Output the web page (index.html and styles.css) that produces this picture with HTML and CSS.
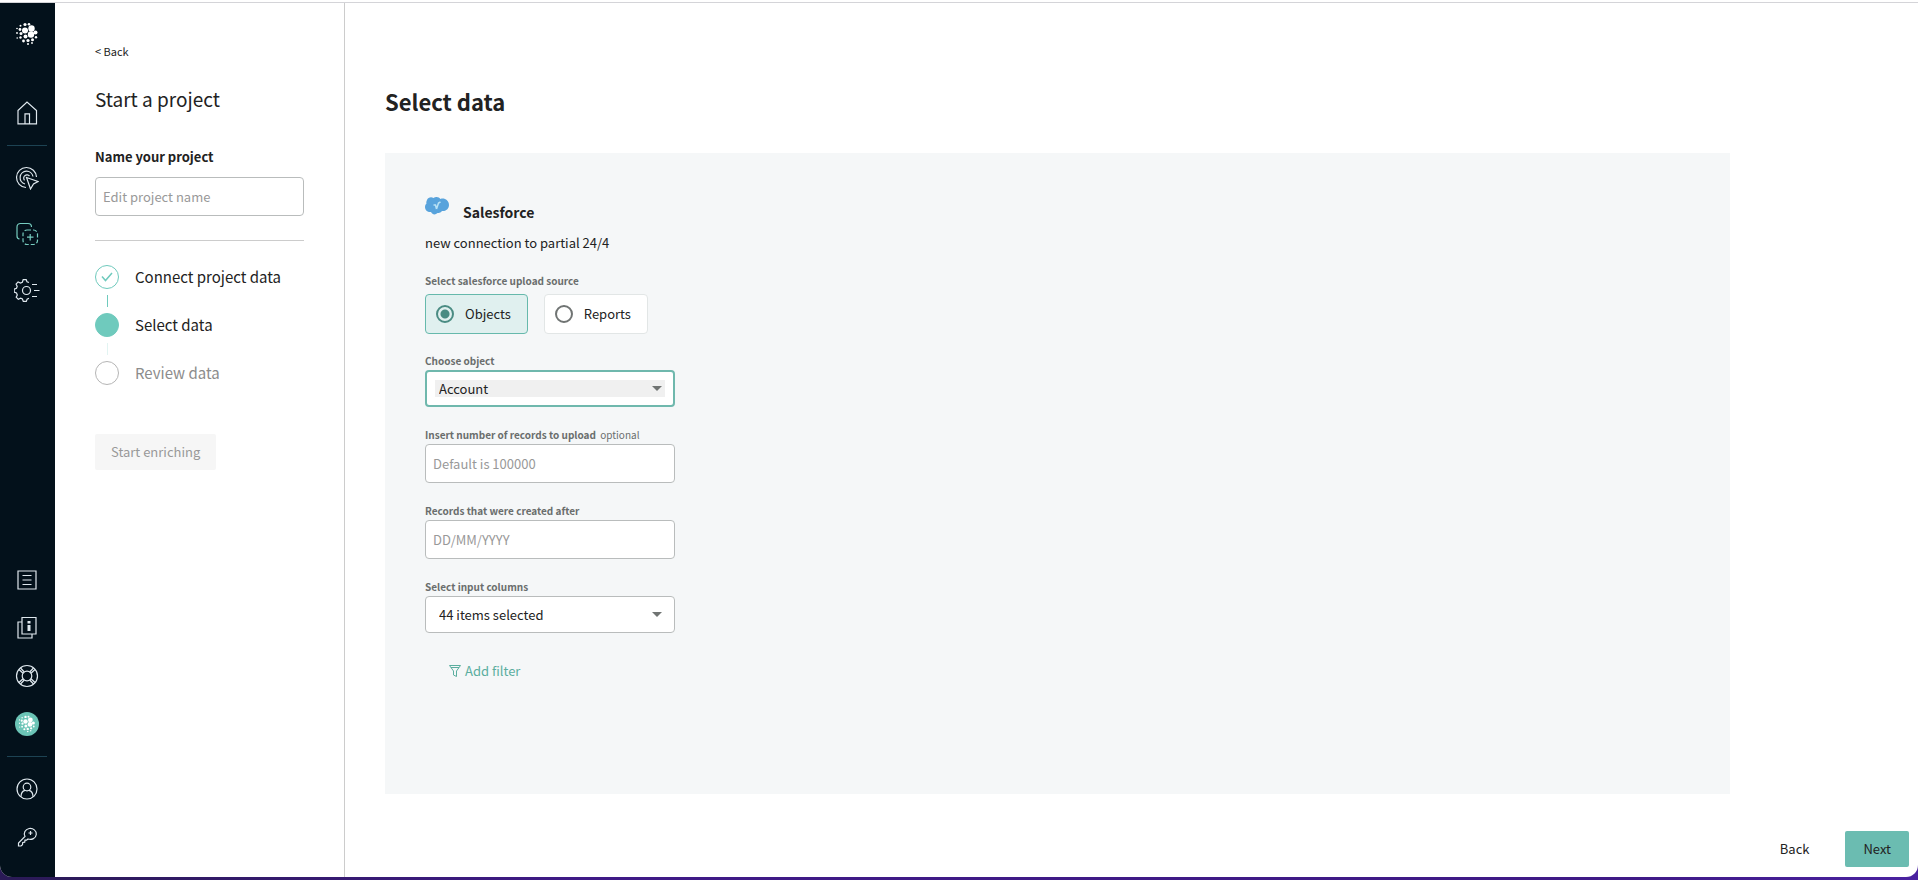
FILE: index.html
```html
<!DOCTYPE html>
<html lang="en">
<head>
    <meta charset="UTF-8">
    <meta name="viewport" content="width=device-width, initial-scale=1.0">
    <title>Start a project</title>
    <link rel="stylesheet" href="styles.css">
</head>
<body>

<div class="app">
    <!-- Left icon bar -->
    <nav class="sidebar" aria-label="Main">
        <a href="#" class="logo" aria-label="Dashboard">
            <svg width="24" height="24" viewBox="0 0 24 24">
                <g id="globe" fill="currentColor" stroke="none">
                    <circle cx="10" cy="8.500" r="3"/>
                    <circle cx="16.500" cy="6.500" r="3.200"/>
                    <circle cx="16" cy="12.500" r="3.200"/>
                    <circle cx="20.500" cy="10.500" r="2"/>
                    <circle cx="10.500" cy="14.500" r="2"/>
                    <circle cx="10" cy="2.500" r="1.600"/>
                    <circle cx="14" cy="2.200" r="1.300"/>
                    <circle cx="5.500" cy="3.800" r="1"/>
                    <circle cx="5" cy="7.500" r="1.400"/>
                    <circle cx="2" cy="6.500" r="0.800"/>
                    <circle cx="6" cy="11.500" r="1.500"/>
                    <circle cx="2" cy="11" r="0.900"/>
                    <circle cx="5.500" cy="15.500" r="1.200"/>
                    <circle cx="2.200" cy="16" r="0.800"/>
                    <circle cx="8.500" cy="19" r="1.400"/>
                    <circle cx="13" cy="18.500" r="1.600"/>
                    <circle cx="17.500" cy="17.800" r="1.500"/>
                    <circle cx="21" cy="15.300" r="1.200"/>
                    <circle cx="13" cy="22" r="1"/>
                    <circle cx="17" cy="21" r="0.900"/>
                </g>
            </svg>
        </a>
        <a href="#" class="nav-home" aria-label="Home">
            <svg width="24" height="24" viewBox="0 0 24 24"><path d="M3 9.500 12 1l9.500 8.500v13.300H3zM10 22.800v-10h4.500v10"/></svg>
        </a>
        <hr>
        <a href="#" class="nav-target" aria-label="Targets">
            <svg width="24" height="24" viewBox="0 0 24 24">
                <path d="M11 21.500A10 10 0 1 1 21.500 11"/>
                <path d="M10 18A6.500 6.500 0 1 1 18 10.500"/>
                <path d="M9.500 14.300A3.200 3.200 0 1 1 14.500 10"/>
                <path d="M11.500 11.500l11.500 4-4.500 2.500-3 5z"/>
            </svg>
        </a>
        <a href="#" class="nav-projects active" aria-label="Projects">
            <svg width="24" height="24" viewBox="0 0 24 24">
                <path d="M4.500 17A3 3 0 0 1 2 14V5a3.500 3.500 0 0 1 3.500-3.500h7.500a3.500 3.500 0 0 1 3.500 3.500"/>
                <rect x="8" y="8" width="14.500" height="14.500" rx="4" stroke-dasharray="4 2"/>
                <path d="M15.200 12v6.500M12 15.200h6.500"/>
            </svg>
        </a>
        <a href="#" class="nav-settings" aria-label="Settings">
            <svg width="26" height="24" viewBox="0 0 26 24">
                <path d="M15 3.500l-2-.800-.800-2h-3l-.900 2.500-1.800.8-2.400-1.100-2 2.100 1.100 2.400-.7 1.800-2.300.9v3l2.300.9.800 1.900-1.100 2.300 2.100 2.100 2.400-1.100 1.700.8.900 2.400h3l.800-2.300 1.900-.800"/>
                <circle cx="12.500" cy="11.500" r="4"/>
                <path d="M18 5.500h5M20 11.500h5.500M18 17.500h5"/>
            </svg>
        </a>
        <div class="nav-gap"></div>
        <a href="#" class="nav-list" aria-label="Reports">
            <svg width="24" height="24" viewBox="0 0 24 24"><path d="M3 3h18v18H3zM7.500 7.500h9M7.500 12h9M7.500 16.500h9"/></svg>
        </a>
        <a href="#" class="nav-docs" aria-label="Documentation">
            <svg width="24" height="24" viewBox="0 0 24 24">
                <path d="M7 1.500h14v16.500H7zM7 6H3v16h14v-4"/>
                <path d="M14 5v2.500M14 9v6" stroke-width="3"/>
            </svg>
        </a>
        <a href="#" class="nav-help" aria-label="Help">
            <svg width="24" height="24" viewBox="0 0 24 24">
                <circle cx="12" cy="12" r="10.500"/>
                <circle cx="12" cy="12" r="4.800"/>
                <path d="M4 5.500l4 3.800M5.500 4l3.800 4M20 5.500l-4 3.800M18.500 4l-3.800 4M4 18.500l4-3.800M5.500 20l3.800-4M20 18.500l-4-3.800M18.500 20l-3.800-4"/>
            </svg>
        </a>
        <a href="#" class="nav-brand" aria-label="Workspace">
            <svg width="18" height="18" viewBox="0 0 24 24"><use href="#globe"/></svg>
        </a>
        <hr>
        <a href="#" class="nav-account" aria-label="Account">
            <svg width="24" height="24" viewBox="0 0 24 24">
                <circle cx="12" cy="12" r="10"/>
                <circle cx="12" cy="10" r="3.800"/>
                <path d="M6 19.800c0-3.500 1.800-6 4-6.500M18 19.800c0-3.500-1.800-6-4-6.500"/>
            </svg>
        </a>
        <a href="#" class="nav-key" aria-label="API keys">
            <svg width="24" height="24" viewBox="0 0 24 24">
                <path d="M10 12.500a6 5.500 0 1 1 3 2.500l-1.500 1.200h-1.500l-.3 2-2 .300-.200 2.200-1.500 1.300H3.500v-3z"/>
                <path d="M13.500 9h4M15.500 7v4"/>
            </svg>
        </a>
    </nav>

    <!-- Project steps -->
    <aside class="project-panel">
        <a href="#" class="back-link">&lt; Back</a>
        <h2>Start a project</h2>
        <label for="project-name" class="name-label">Name your project</label>
        <input type="text" id="project-name" class="text-input" placeholder="Edit project name">
        <hr>
        <ol class="steps">
            <li class="done">
                <span class="dot"><svg width="12" height="10" viewBox="0 0 12 10"><path d="M1 4.500 4.500 8.500 11 1"/></svg></span>
                Connect project data
            </li>
            <li class="current"><span class="dot"></span>Select data</li>
            <li class="todo"><span class="dot"></span>Review data</li>
        </ol>
        <button type="button" class="btn btn-disabled" disabled>Start enriching</button>
    </aside>

    <main class="content">
        <h1>Select data</h1>

        <form class="card" id="data-form">
            <div class="source">
                <svg width="24" height="18" viewBox="0 0 24 18">
                    <path fill="#58a3dc" d="M2 3C3 .5 6-.5 8.500 1 11-.8 14 0 15.500 2 19 .5 24 3 24 8c0 4-3.500 6.500-7 6-1.500 2-3.500 2-4.500 2-2 2-5 2-6.500-1C3 15.500 0 13.500 0 10c0-1.500.5-2.500 1.500-3.500C1 5.500 1.500 4 2 3z"/>
                    <path fill="none" stroke="#b9e2f5" stroke-width="1.500" d="M8.500 8h2l1 4M15.500 5l-2 1-2 6"/>
                </svg>
                <h3>Salesforce</h3>
            </div>
            <p class="connection">new connection to partial 24/4</p>

            <fieldset>
                <legend>Select salesforce upload source</legend>
                <div class="radio-row">
                    <label class="radio-card"><input type="radio" name="source" value="objects" checked>Objects</label>
                    <label class="radio-card"><input type="radio" name="source" value="reports">Reports</label>
                </div>
            </fieldset>

            <div class="field">
                <label for="object">Choose object</label>
                <div class="select-box focused">
                    <select id="object">
                        <option>Account</option>
                        <option>Contact</option>
                        <option>Lead</option>
                    </select>
                    <svg class="arrow" width="10" height="5" viewBox="0 0 10 5"><path d="M0 0h10L5 5z"/></svg>
                </div>
            </div>

            <div class="field">
                <label for="records">Insert number of records to upload <span class="optional">optional</span></label>
                <input type="text" id="records" class="text-input" placeholder="Default is 100000">
            </div>

            <div class="field">
                <label for="created">Records that were created after</label>
                <input type="text" id="created" class="text-input" placeholder="DD/MM/YYYY">
            </div>

            <div class="field">
                <label for="columns">Select input columns</label>
                <div class="select-box">
                    <select id="columns">
                        <option>44 items selected</option>
                    </select>
                    <svg class="arrow" width="10" height="5" viewBox="0 0 10 5"><path d="M0 0h10L5 5z"/></svg>
                </div>
            </div>

            <button type="button" class="add-filter">
                <svg width="12" height="12" viewBox="0 0 12 12"><path d="M.5.500h11L7.500 6v5.500L4.500 10V6zM2 2.500h8"/></svg>
                Add filter
            </button>
        </form>

        <footer class="actions">
            <button type="button" class="btn btn-plain">Back</button>
            <button type="submit" form="data-form" class="btn btn-next">Next</button>
        </footer>
    </main>
</div>

</body>
</html>
```
FILE: styles.css
```css
* {
    box-sizing: border-box;
}
body {
    margin: 0;
    min-height: 100vh;
    display: flex;
    padding-bottom: 3px;
    background: linear-gradient(90deg, #2a1a55, #3f1a86 30%, #3f1a86 85%, #4a22a0);
    font-family: "Noto Sans CJK SC", "Noto Sans", sans-serif;
    font-size: 13px;
    line-height: 20px;
    color: #222;
}
h1, h2, h3, p, ol, fieldset, legend {
    margin: 0;
    padding: 0;
}
a {
    color: inherit;
    text-decoration: none;
}
button, input, select {
    font: inherit;
    color: inherit;
}
svg {
    display: block;
}
.app {
    flex: 1;
    display: flex;
    padding-top: 1px;
    border-top: 2px solid #fff;
    border-radius: 0 0 12px 12px;
    background: #fff;
    box-shadow: inset 0 1px #d4d4d8;
    overflow: hidden;
}

/* Icon bar */
.sidebar {
    width: 55px;
    flex: none;
    display: flex;
    flex-direction: column;
    align-items: center;
    padding: 19px 1px 29px 0;
    background: #03111b;
    color: #fff;
}
.sidebar svg {
    fill: none;
    stroke: #dfe8ee;
    stroke-width: 1.2;
}
.sidebar hr {
    width: 40px;
    margin: 0;
    border: 0;
    border-top: 1px solid #1d4353;
}
.nav-home {
    margin: 55px 0 20px;
}
.nav-target {
    margin: 20px 0 32px;
}
.nav-projects {
    margin-bottom: 33px;
}
.sidebar .active svg {
    stroke: #76cdc0;
}
.nav-gap {
    flex: 1;
}
.nav-list, .nav-docs, .nav-help {
    margin-bottom: 24px;
}
.nav-brand {
    width: 24px;
    height: 24px;
    display: grid;
    place-items: center;
    margin-bottom: 20px;
    border-radius: 50%;
    background: #6bc4b6;
}
.nav-account {
    margin: 20px 0 23px;
}

/* Project panel */
.project-panel {
    width: 290px;
    flex: none;
    padding: 38px 40px;
    border-right: 1px solid #ccc;
}
.back-link {
    display: block;
    font-size: 11px;
}
.project-panel h2 {
    margin: 23px 0 33px;
    font-size: 19px;
    line-height: 30px;
    font-weight: 400;
}
.name-label {
    display: block;
    margin-bottom: 10px;
    font-weight: 700;
}
.text-input {
    display: block;
    width: 100%;
    height: 39px;
    padding: 0 7px;
    border: 1px solid #b9bcbc;
    border-radius: 4px;
    background: #fff;
}
.text-input::placeholder {
    color: #999;
}
.project-panel hr {
    margin: 24px 0;
    border: 0;
    border-top: 1px solid #ccc;
}
.steps {
    list-style: none;
    display: grid;
    gap: 24px;
    margin-bottom: 49px;
    font-size: 15px;
    line-height: 24px;
}
.steps li {
    display: flex;
    gap: 16px;
}
.steps .dot {
    position: relative;
    width: 24px;
    height: 24px;
    display: grid;
    place-items: center;
    border: 1px solid #6fcabd;
    border-radius: 50%;
}
.steps svg {
    fill: none;
    stroke: #6fcabd;
    stroke-width: 1.5;
}
.steps .current .dot {
    background: #6fcabd;
}
.steps .todo {
    color: #8c8c8c;
}
.steps .todo .dot {
    border-color: #b5b5b5;
}
/* connector line between two dots */
.steps li:not(:last-child) .dot::after {
    content: "";
    position: absolute;
    top: 29px;
    left: 11px;
    height: 12px;
    border-left: 1px solid #6fcabd;
}
.steps .current .dot::after {
    opacity: 0.2;
}
.btn {
    height: 36px;
    padding: 0 16px;
    border: 0;
    border-radius: 2px;
    background: none;
    cursor: pointer;
}
.btn-disabled {
    background: #f6f6f6;
    color: #999;
    cursor: default;
}

/* Main content */
.content {
    flex: 1;
    display: flex;
    flex-direction: column;
    padding: 81px 9px 10px 40px;
}
.content h1 {
    font-size: 22px;
    line-height: 34px;
}
.card {
    flex: 1;
    margin: 35px 179px 37px 0;
    padding: 44px 40px;
    background: #f5f7f8;
}
.source {
    display: flex;
    gap: 14px;
}
.source h3 {
    padding-top: 3px;
    font-size: 14px;
    line-height: 24px;
}
.connection {
    margin: 9px 0 20px;
}
fieldset {
    border: 0;
    margin-bottom: 19px;
}
legend, .field label {
    display: block;
    font-size: 10px;
    line-height: 16px;
    font-weight: 700;
    color: #6a6e6d;
}
.field .optional {
    margin-left: 2px;
    font-weight: 400;
}
.radio-row {
    display: flex;
    gap: 16px;
    padding-top: 5px;
}
.radio-card {
    height: 40px;
    display: flex;
    align-items: center;
    gap: 11px;
    padding: 0 16px 0 10px;
    border: 1px solid #e2e6e6;
    border-radius: 4px;
    background: #fff;
}
.radio-card:has(:checked) {
    border-color: #66b9ac;
    background: #e0f0ef;
}
.radio-card input {
    appearance: none;
    width: 18px;
    height: 18px;
    margin: 0;
    border: 2px solid #707473;
    border-radius: 50%;
    background: #fff;
}
.radio-card input:checked {
    border-color: #4a8c83;
    background: radial-gradient(circle, #4a8c83 4px, #e0f0ef 5px);
}
.field {
    width: 250px;
    margin-bottom: 20px;
}
.field label {
    margin-bottom: 1px;
}
.select-box {
    height: 37px;
    display: grid;
    align-items: center;
    padding: 0 9px;
    border: 1px solid #b9bcbc;
    border-radius: 4px;
    background: #fff;
}
.select-box.focused {
    padding: 0 8px;
    border: 2px solid #6fb8ad;
}
.select-box select, .select-box .arrow {
    grid-area: 1 / 1;
}
.select-box select {
    appearance: none;
    height: 17px;
    padding: 0 4px;
    border: 0;
    line-height: 17px;
    background: none;
    outline: none;
}
.select-box.focused select {
    background: #f0f0f0;
}
.arrow {
    justify-self: end;
    margin-right: 3px;
    fill: #707473;
    pointer-events: none;
}
.add-filter {
    display: flex;
    align-items: center;
    gap: 4px;
    margin: 28px 0 0 24px;
    padding: 0;
    border: 0;
    background: none;
    color: #5bae9f;
    cursor: pointer;
}
.add-filter svg {
    fill: none;
    stroke: #5bae9f;
}
.actions {
    display: flex;
    justify-content: flex-end;
    gap: 20px;
}
.btn-next {
    padding: 0 18px;
    background: #6bbcb1;
}
```
